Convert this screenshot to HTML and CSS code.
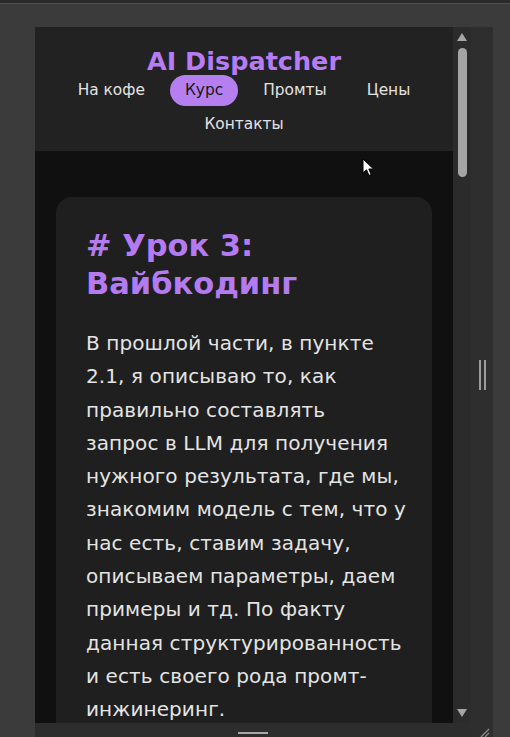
FILE: index.html
```html
<!DOCTYPE html>
<html lang="ru">
<head>
<meta charset="utf-8">
<title>AI Dispatcher — Урок 3</title>
<link rel="stylesheet" href="styles.css">
</head>
<body>
<div class="topstrip"></div>
<div class="device">
  <div class="viewport">
    <header class="site-header">
      <h1 class="logo">AI Dispatcher</h1>
      <nav class="nav">
        <a class="nav-item">На кофе</a>
        <a class="nav-item active">Курс</a>
        <a class="nav-item">Промты</a>
        <a class="nav-item">Цены</a>
        <a class="nav-item">Контакты</a>
      </nav>
    </header>
    <main class="main">
      <article class="card">
        <h2 class="lesson-title"># Урок 3: Вайбкодинг</h2>
        <p class="lesson-text">В прошлой части, в пункте<br>2.1, я описываю то, как<br>правильно составлять<br>запрос в LLM для получения<br>нужного результата, где мы,<br>знакомим модель с тем, что у<br>нас есть, ставим задачу,<br>описываем параметры, даем<br>примеры и тд. По факту<br>данная структурированность<br>и есть своего рода промт-<br>инжинеринг.</p>
      </article>
    </main>
    <svg class="cursor" width="13" height="19" viewBox="0 0 13 19"><path d="M1 1 L1 15 L4.5 11.8 L7 17.5 L9.2 16.5 L6.8 11 L11.5 11 Z" fill="#fff" stroke="#000" stroke-width="1"/></svg>
  </div>
  <div class="scrolltrack">
    <span class="arrow up"></span>
    <span class="thumb"></span>
    <span class="spacer"></span>
    <span class="arrow down"></span>
  </div>
  <div class="sidehandle"><span class="grip"></span></div>
  <div class="bottombar"><span class="hgrip"></span></div>
</div>
<svg class="corner" width="12" height="10" viewBox="0 0 12 10"><path d="M3 10 L11 2 M7 10 L11 6" stroke="#8a8a8a" stroke-width="1.3"/></svg>
</body>
</html>
```
FILE: styles.css
```css
html, body {
  margin: 0;
  padding: 0;
}
body {
  background: #3b3b3b;
  width: 510px;
  height: 737px;
  overflow: hidden;
  position: relative;
  font-family: "DejaVu Sans", "Noto Sans", sans-serif;
}
.topstrip {
  height: 3px;
  background: #2a2a2a;
  border-bottom: 1px solid #4e4e4e;
}
.device {
  display: grid;
  grid-template-columns: 418px 18px 22px;
  grid-template-rows: 696px 14px;
  margin: 23px 0 0 35px;
}
.viewport {
  grid-row: 1;
  grid-column: 1;
  overflow: hidden;
  position: relative;
  background: #101010;
}
.site-header {
  background: #222222;
  padding: 20px 0 11px;
  text-align: center;
}
.logo {
  margin: 0;
  font-size: 25.5px;
  line-height: 28px;
  font-weight: 700;
  color: #b67cf3;
}
.nav {
  display: flex;
  flex-wrap: wrap;
  justify-content: center;
  column-gap: 10px;
  row-gap: 3px;
  width: 390px;
  margin: 0 auto;
}
.nav-item {
  display: block;
  padding: 0 15px;
  height: 31px;
  line-height: 31px;
  border-radius: 16px;
  font-size: 15.4px;
  font-weight: 500;
  color: #e2e2e2;
}
.nav-item.active {
  background: #b57ff0;
  color: #161616;
}
.main {
  padding: 46px 21px 0;
}
.card {
  background: #1f1f1f;
  border-radius: 16px;
  padding: 30px 30px 40px;
}
.lesson-title {
  margin: 0;
  font-size: 30.5px;
  line-height: 38px;
  font-weight: 700;
  color: #b47bf1;
}
.lesson-text {
  margin: 24px 0 0;
  font-size: 20px;
  letter-spacing: 0.1px;
  line-height: 33.3px;
  white-space: nowrap;
  color: #e4e4e4;
}
.cursor {
  position: absolute;
  left: 327px;
  top: 131px;
}
.scrolltrack {
  grid-row: 1;
  grid-column: 2;
  background: #2b2b2b;
  display: flex;
  flex-direction: column;
  align-items: center;
  padding: 6px 0 6px;
}
.arrow {
  width: 0;
  height: 0;
  border-left: 5px solid transparent;
  border-right: 5px solid transparent;
}
.arrow.up {
  border-bottom: 8px solid #a6a6a6;
}
.arrow.down {
  border-top: 8px solid #a6a6a6;
}
.thumb {
  margin-top: 7px;
  width: 9px;
  height: 129px;
  border-radius: 5px;
  background: #a4a4a4;
}
.spacer {
  flex: 1;
}
.sidehandle {
  grid-row: 1 / span 2;
  grid-column: 3;
  background: #2e2e2e;
  display: flex;
  align-items: center;
  justify-content: center;
  padding-bottom: 14px;
}
.grip {
  width: 3px;
  height: 30px;
  border-left: 2px solid #9c9c9c;
  border-right: 2px solid #9c9c9c;
}
.bottombar {
  grid-row: 2;
  grid-column: 1 / span 2;
  background: #2d2d2d;
  display: flex;
  justify-content: center;
  align-items: flex-end;
}
.hgrip {
  width: 30px;
  height: 2px;
  background: #a8a8a8;
  margin-bottom: 3px;
}
.corner {
  position: absolute;
  left: 478px;
  top: 727px;
}
```
